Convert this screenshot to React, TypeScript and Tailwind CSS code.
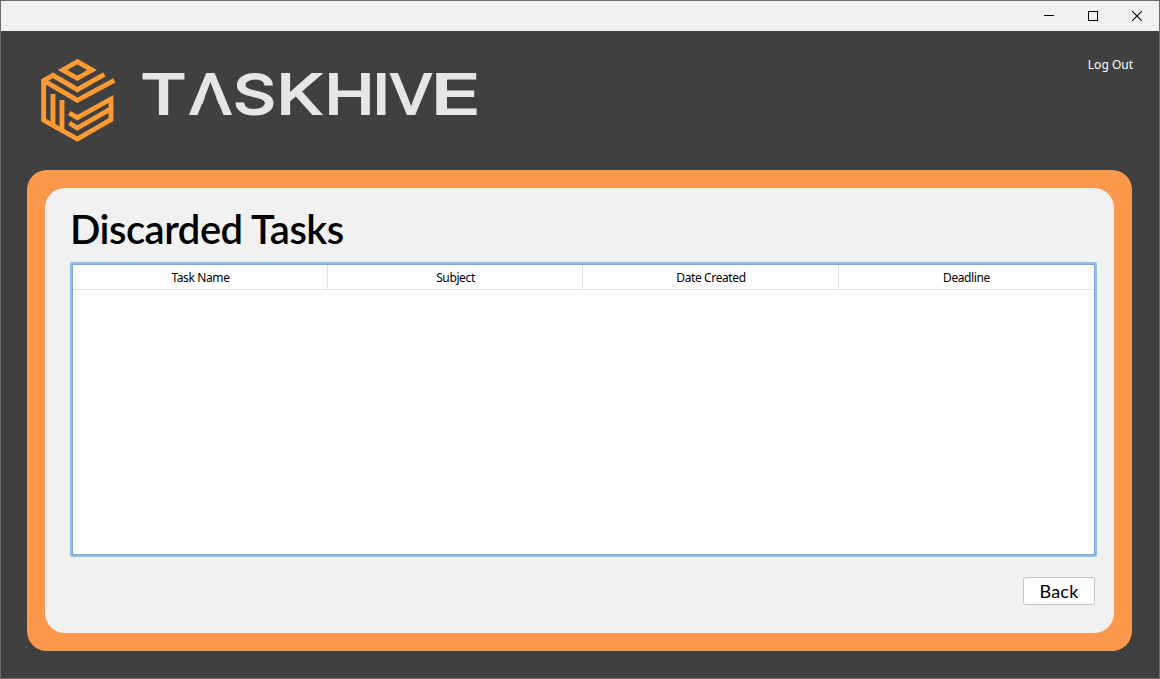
const columns = ["Task Name", "Subject", "Date Created", "Deadline"];

function HiveLogo() {
  return (
    <svg className="h-[100px] w-[100px] shrink-0" viewBox="0 0 300 300" fill="none" stroke="#fd9a34" strokeWidth="14.5">
      <path d="M142 35 L186 60 L142 85 L98 60 Z" />
      <path d="M223 73 L142 119 L69 76 L41 92 V210 L142 267 L243 209 V147 L142 203 L118 189" />
      <path d="M253 91 L142 151 L45 94" />
      <path d="M69 132 V225 M96 150 V240" />
      <path d="M118 219 L142 234 L244 176" />
    </svg>
  );
}

function Wordmark() {
  return (
    <svg className="mt-[5px] h-[75px] w-[360px] shrink-0" viewBox="130 55 360 75">
      <text y="114" fill="#e6e6e6" stroke="#e6e6e6" strokeWidth="2" className="font-['Inter',sans-serif] text-[55.5px] font-normal">
        <tspan x="140.5" textLength="46" lengthAdjust="spacingAndGlyphs">T</tspan>
        <tspan x="189" textLength="43" lengthAdjust="spacingAndGlyphs">A</tspan>
        <tspan x="233" textLength="43" lengthAdjust="spacingAndGlyphs">S</tspan>
        <tspan x="276.5" textLength="46" lengthAdjust="spacingAndGlyphs">K</tspan>
        <tspan x="324.5" textLength="50" lengthAdjust="spacingAndGlyphs">H</tspan>
        <tspan x="372.5" textLength="17.5" lengthAdjust="spacingAndGlyphs">I</tspan>
        <tspan x="389.5" textLength="43" lengthAdjust="spacingAndGlyphs">V</tspan>
        <tspan x="430.5" textLength="50" lengthAdjust="spacingAndGlyphs">E</tspan>
      </text>
      <path d="M210.5 83 L223.7 117 H197.3 Z" fill="#404040" />
    </svg>
  );
}

export default function App() {
  return (
    <div className="relative flex h-[679px] w-[1160px] flex-col overflow-hidden border border-[#6b6b6b] bg-[#404040] font-['Noto_Sans',sans-serif] text-black">
      <div className="absolute -top-px left-[554px] flex h-px">
        <div className="w-12 bg-[#0078d7]" />
        <div className="w-[193px] bg-[#e5e5e5]" />
      </div>
      <header className="flex h-[30px] shrink-0 items-center justify-end bg-[#f1f1f1]">
        <button className="flex h-full w-11 items-center justify-center" aria-label="Minimize">
          <svg width="10" height="10" stroke="black" shapeRendering="crispEdges"><path d="M0 4.5H10" /></svg>
        </button>
        <button className="flex h-full w-11 items-center justify-center" aria-label="Maximize">
          <svg width="10" height="10" fill="none" stroke="black" shapeRendering="crispEdges"><path d="M.5 .5H9.5V9.5H.5Z" /></svg>
        </button>
        <button className="flex h-full w-11 items-center justify-center" aria-label="Close">
          <svg width="10" height="10" stroke="black" strokeWidth="1.1"><path d="M0 0L10 10M10 0L0 10" /></svg>
        </button>
      </header>
      <div className="flex h-[139px] shrink-0 items-start pt-[19px] pr-[26px] pl-[29px]">
        <HiveLogo />
        <Wordmark />
        <button className="mt-[6px] ml-auto text-[12px] leading-[18px] whitespace-nowrap text-white">Log Out</button>
      </div>
      <main className="mx-[26px] h-[481px] w-[1105px] shrink-0 rounded-[20px] bg-[#fc984b] p-[18px]">
        <section className="flex h-[445px] flex-col rounded-[20px] bg-[#f1f1f1] pr-[17px] pl-[25px]">
          <h1 className="flex h-[74px] items-center pt-[8px] font-['Lato',sans-serif] text-[40px] leading-none font-semibold tracking-[-0.5px] whitespace-nowrap">Discarded Tasks</h1>
          <div className="h-[295px] w-[1027px] rounded-[2px] border-2 border-[#91bfec] bg-white">
            <div className="h-full border border-[#7da8d3]">
              <div className="grid h-[25px] grid-cols-[255px_255px_256px_1fr] border-b border-[#e2e2e2]">
                {columns.map((column) => (
                  <div key={column} className="flex items-center justify-center border-r border-[#e2e2e2] pt-px pl-px text-[12px] tracking-[-0.38px] last:border-r-0 last:pl-0">{column}</div>
                ))}
              </div>
            </div>
          </div>
          <button className="mt-5 mr-0.5 flex h-7 w-[72px] items-center justify-center self-end rounded-[3px] border border-[#c4c4c4] bg-white pb-px font-['Lato',sans-serif] text-[18px] leading-none tracking-[0.2px]">Back</button>
        </section>
      </main>
    </div>
  );
}
